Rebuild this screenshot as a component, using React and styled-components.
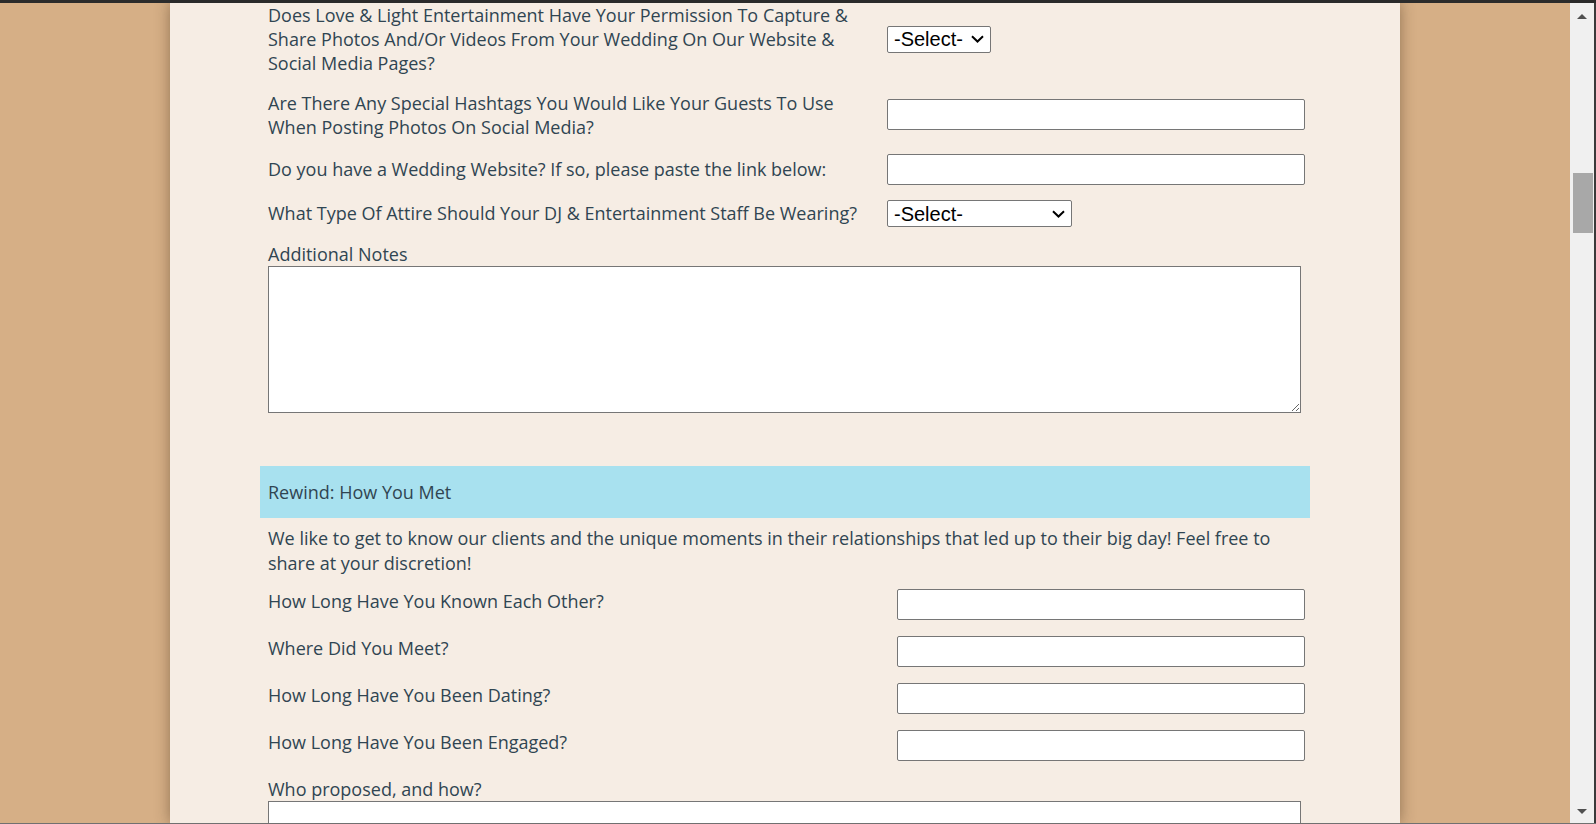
import styled, { createGlobalStyle } from "styled-components";

const GlobalStyle = createGlobalStyle`
  html, body {
    margin: 0;
    padding: 0;
    overflow: hidden;
  }
  body {
    font-family: "Open Sans", "Liberation Sans", sans-serif;
  }
  * {
    box-sizing: border-box;
  }
`;

const chevron =
  "data:image/svg+xml;utf8," +
  encodeURIComponent(
    '<svg xmlns="http://www.w3.org/2000/svg" width="13" height="8" viewBox="0 0 13 8"><path d="M1 1.2l5.5 5.3 5.5-5.3" fill="none" stroke="#000" stroke-width="2"/></svg>'
  );

const Window = styled.div`
  width: 1596px;
  height: 824px;
  display: flex;
  flex-direction: column;
  background-color: #d6af86;
  border-top: 3px solid #2b2b2b;
  border-bottom: 1px solid #707070;
`;

const Body = styled.div`
  flex: 1;
  min-height: 0;
  display: flex;
  border-right: 2px solid #3a3a3a;
`;

const Viewport = styled.div`
  flex: 1;
  overflow: hidden;
  display: flex;
  justify-content: center;
`;

const Panel = styled.div`
  width: 1230px;
  flex-shrink: 0;
  padding: 0 90px;
  background-color: #f6ede4;
  box-shadow: 0 0 14px rgba(60, 40, 20, 0.45);
  color: #304552;
`;

const Field = styled.div`
  display: grid;
  grid-template-columns: 1fr ${(p) => p.$control}px;
  column-gap: 15px;
  align-items: ${(p) => p.$align || "center"};
  padding: 0 5px 0 8px;
  margin-bottom: ${(p) => p.$gap}px;
`;

const Label = styled.label`
  font-size: 18px;
  line-height: 24.2px;
`;

const Select = styled.select`
  appearance: none;
  width: ${(p) => p.$width}px;
  height: 27px;
  padding: 0 24px 0 6px;
  font-family: "Liberation Sans", Arial, sans-serif;
  font-size: 20px;
  color: #000;
  background: #fff url("${chevron}") no-repeat right 6px center / 13px 8px;
  border: 1px solid #767676;
  border-radius: 2px;
  justify-self: start;
`;

const Input = styled.input`
  width: 100%;
  height: 31px;
  background-color: #fff;
  border: 1px solid #767676;
  border-radius: 2px;
`;

const Block = styled.div`
  padding: 0 5px 0 8px;
  margin-bottom: ${(p) => p.$gap || 0}px;
`;

const BlockLabel = styled(Label)`
  display: block;
`;

const TextArea = styled.textarea`
  display: block;
  width: 1033px;
  height: ${(p) => p.$height}px;
  background-color: #fff;
  border: 1px solid #767676;
  border-radius: 0;
  resize: vertical;
`;

const SectionBand = styled.h3`
  margin: 0;
  padding: 14px 8px 14px;
  background-color: #a8e1ef;
  font-size: 18px;
  line-height: 24.2px;
  font-weight: 400;
`;

const Intro = styled.p`
  margin: 8px 0 14px;
  padding: 0 5px 0 8px;
  font-size: 18px;
  line-height: 24.2px;
`;

const Scrollbar = styled.div`
  width: 24px;
  display: flex;
  flex-direction: column;
  background-color: #f0f0f0;
`;

const ArrowUp = styled.div`
  width: 0;
  height: 0;
  margin: 11px 0 0 7px;
  border-left: 5.5px solid transparent;
  border-right: 5.5px solid transparent;
  border-bottom: 5px solid #505050;
`;

const ArrowDown = styled.div`
  width: 0;
  height: 0;
  margin: auto 0 9px 7px;
  border-left: 5.5px solid transparent;
  border-right: 5.5px solid transparent;
  border-top: 5px solid #505050;
`;

const Thumb = styled.div`
  width: 20px;
  height: 60px;
  margin: 154px 0 0 3px;
  background-color: #a8a8a8;
`;

const firstFields = [
  {
    label:
      "Does Love & Light Entertainment Have Your Permission To Capture & Share Photos And/Or Videos From Your Wedding On Our Website & Social Media Pages?",
    select: 104,
  },
  {
    label:
      "Are There Any Special Hashtags You Would Like Your Guests To Use When Posting Photos On Social Media?",
  },
  {
    label: "Do you have a Wedding Website? If so, please paste the link below:",
  },
  {
    label: "What Type Of Attire Should Your DJ & Entertainment Staff Be Wearing?",
    select: 185,
  },
];

const storyFields = [
  "How Long Have You Known Each Other?",
  "Where Did You Meet?",
  "How Long Have You Been Dating?",
  "How Long Have You Been Engaged?",
];

export default function App() {
  return (
    <>
      <GlobalStyle />
      <Window>
        <Body>
          <Viewport>
            <Panel>
              {firstFields.map((f) => (
                <Field key={f.label} $control={418} $gap={15}>
                  <Label>{f.label}</Label>
                  {f.select ? (
                    <Select $width={f.select} defaultValue="">
                      <option value="">-Select-</option>
                    </Select>
                  ) : (
                    <Input type="text" />
                  )}
                </Field>
              ))}

              <Block $gap={53}>
                <BlockLabel>Additional Notes</BlockLabel>
                <TextArea $height={147} />
              </Block>

              <SectionBand>Rewind: How You Met</SectionBand>
              <Intro>
                We like to get to know our clients and the unique moments in
                their relationships that led up to their big day! Feel free to
                share at your discretion!
              </Intro>

              {storyFields.map((label) => (
                <Field key={label} $control={408} $gap={16} $align="start">
                  <Label>{label}</Label>
                  <Input type="text" />
                </Field>
              ))}

              <Block>
                <BlockLabel>Who proposed, and how?</BlockLabel>
                <TextArea $height={147} />
              </Block>
            </Panel>
          </Viewport>
          <Scrollbar>
            <ArrowUp />
            <Thumb />
            <ArrowDown />
          </Scrollbar>
        </Body>
      </Window>
    </>
  );
}
